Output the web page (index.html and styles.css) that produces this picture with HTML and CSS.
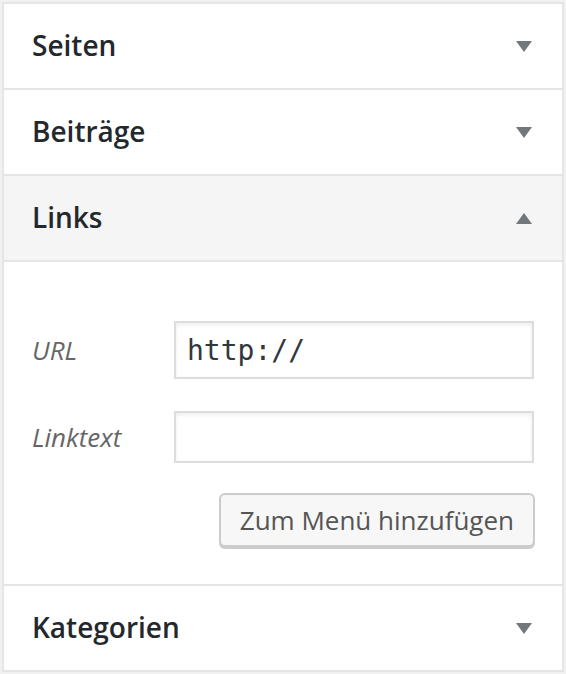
FILE: index.html
```html
<!DOCTYPE html>
<html lang="de">
<head>
<meta charset="utf-8">
<title>Menüs</title>
<link rel="stylesheet" href="styles.css">
</head>
<body>
<div class="accordion">
  <div class="section">
    <div class="title"><span>Seiten</span><svg class="arrow" width="16" height="11" viewBox="0 0 16 11"><path d="M0 0H16L8 11Z"/></svg></div>
  </div>
  <div class="section">
    <div class="title"><span>Beiträge</span><svg class="arrow" width="16" height="11" viewBox="0 0 16 11"><path d="M0 0H16L8 11Z"/></svg></div>
  </div>
  <div class="section open">
    <div class="title"><span>Links</span><svg class="arrow" width="16" height="11" viewBox="0 0 16 11"><path d="M0 11H16L8 0Z"/></svg></div>
    <div class="content">
      <div class="row">
        <label class="label">URL</label>
        <input class="input url" type="text" value="http://">
      </div>
      <div class="row">
        <label class="label">Linktext</label>
        <input class="input" type="text" value="">
      </div>
      <div class="actions">
        <button class="button" type="button">Zum Menü hinzufügen</button>
      </div>
    </div>
  </div>
  <div class="section">
    <div class="title"><span>Kategorien</span><svg class="arrow" width="16" height="11" viewBox="0 0 16 11"><path d="M0 0H16L8 11Z"/></svg></div>
  </div>
</div>
</body>
</html>
```
FILE: styles.css
```css
html, body {
  margin: 0;
  padding: 0;
  background: #f1f1f1;
}
body {
  padding: 2px;
  font-family: "Open Sans", "Noto Sans", sans-serif;
}
.accordion {
  background: #fff;
  border: 2px solid #e5e5e5;
}
.section + .section {
  border-top: 2px solid #e5e5e5;
}
.title {
  display: flex;
  align-items: center;
  justify-content: space-between;
  padding: 20px 30px 22px 28px;
  font-size: 28px;
  line-height: 42px;
  font-weight: 600;
  color: #23282d;
}
.arrow {
  fill: #72777c;
  margin-top: 2px;
}
.open .title {
  background: #f5f5f5;
  border-bottom: 2px solid #e5e5e5;
}
.content {
  padding: 59px 28px 35px 28px;
  display: flex;
  flex-direction: column;
}
.row {
  display: flex;
  align-items: center;
  margin-bottom: 32px;
}
.row + .row {
  margin-bottom: 30px;
}
.label {
  width: 142px;
  font-size: 26px;
  font-style: italic;
  color: #666;
}
.input {
  box-sizing: border-box;
  width: 360px;
  height: 52px;
  border: 2px solid #ddd;
  box-shadow: inset 0 2px 4px rgba(0,0,0,0.07);
  background: #fff;
  padding: 0 11px;
  margin: 0;
  outline: none;
}
.input.url {
  height: 58px;
  font-family: "DejaVu Sans Mono", "Liberation Mono", monospace;
  font-size: 28px;
  color: #32373c;
}
.actions {
  display: flex;
  justify-content: flex-end;
}
.button {
  box-sizing: border-box;
  height: 54px;
  margin: 0 -1px 2px 0;
  padding: 0 19px;
  background: #f7f7f7;
  border: 2px solid #ccc;
  border-radius: 6px;
  box-shadow: 0 2px 0 #ccc;
  font-family: "Open Sans", "Noto Sans", sans-serif;
  font-size: 26px;
  color: #555;
  line-height: 50px;
}
```
